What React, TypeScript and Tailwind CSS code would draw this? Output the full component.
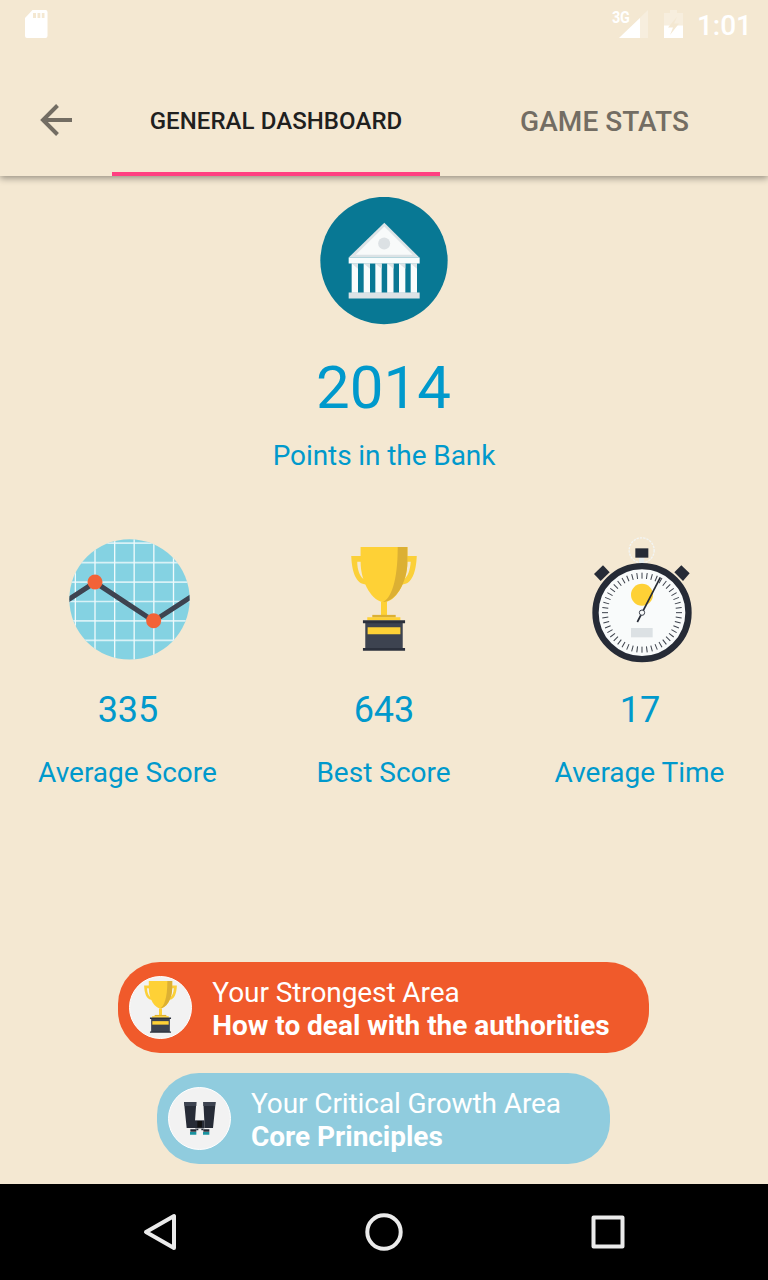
import type { ReactNode } from "react";

interface StatProps {
  icon: ReactNode;
  value: string;
  label: string;
}

interface AreaBadgeProps {
  className: string;
  icon: ReactNode;
  title: string;
  area: string;
}

const BankIcon = () => (
  <svg className="h-32 w-32" viewBox="30 20.5 384 384">
    <circle cx="222" cy="211" r="191" fill="#087894" />
    <path d="M223 98 L328 202 H116 Z" fill="#dce3e6" />
    <path d="M223 109 L308 194 H137 Z" fill="#f8fafa" />
    <path d="M116 202 H329 V220 H116 Z" fill="#f8fcfc" />
    <circle cx="222.500" cy="160" r="18" fill="#dce1e4" />
    {[125, 161, 196, 231.5, 267, 302].map((x) => (
      <g key={x}>
        <path d={`M${x} 220 h19 v88 h-19 Z`} fill="#f8fcfc" />
        <path d={`M${x} 220 h19 v16 Z`} fill="#dce3e6" />
      </g>
    ))}
    <path d="M116 307 H329 V325 H116 Z" fill="#dce3e6" />
  </svg>
);

const ChartIcon = () => (
  <svg className="h-[121px] w-[121px]" viewBox="27 26 363 363">
    <defs>
      <clipPath id="chart-clip">
        <circle cx="208.500" cy="207" r="180.500" />
      </clipPath>
    </defs>
    <g clipPath="url(#chart-clip)">
      <rect x="20" y="20" width="380" height="380" fill="#84d2e2" />
      <path
        d="M20 38.500H400M20 97H400M20 155.500H400M20 213.500H400M20 271.500H400M20 330H400"
        stroke="#d8f1f6"
        strokeWidth="5"
      />
      <path
        d="M46 20V400M105 20V400M164 20V400M222.500 20V400M281.500 20V400M340.500 20V400"
        stroke="#effafc"
        strokeWidth="4"
      />
      <path d="M20 211 L105 156 L281 272 L400 195" fill="none" stroke="#3d4350" strokeWidth="15" />
    </g>
    <circle cx="105" cy="155" r="22.500" fill="#f26337" />
    <circle cx="281" cy="271" r="22.500" fill="#f26337" />
  </svg>
);

const TrophyIcon = ({ className }: { className: string }) => (
  <svg className={className} viewBox="36 36 196 311">
    <path d="M36 63 H66 V80 H54 C54 104 62 127 77 134 L84 148 C50 150 38 110 36 63 Z" fill="#fbd039" />
    <path d="M232 63 H203 V80 H214 C212 104 206 125 192 134 L185 148 C218 150 230 110 232 63 Z" fill="#fbd039" />
    <path d="M64 36 H204 V80 C204 145 166 201 134 201 C102 201 64 145 64 80 Z" fill="#fed136" />
    <path d="M175 36 H204 V80 C204 145 166 201 130 201 C155 190 175 140 175 36 Z" fill="#dcb033" />
    <path d="M125 200 H143 V240 H125 Z" fill="#fed136" />
    <path d="M99 239 H169 V247 H99 Z" fill="#dcb033" />
    <path d="M84 246 H183 V256 H84 Z" fill="#fed136" />
    <path d="M78 260 H190 V341 H78 Z" fill="#3d4350" />
    <path d="M71 255 H197 V264 H71 Z M71 338 H197 V346 H71 Z" fill="#2b303c" />
    <path d="M85 276 H183 V297 H85 Z" fill="#fed136" />
  </svg>
);

const ticks = Array.from({ length: 48 }, (_, i) => i * 7.5);

const StopwatchIcon = () => (
  <svg className="h-[126px] w-[100px]" viewBox="35 20 300 378">
    <circle cx="184" cy="60" r="37.500" fill="none" stroke="#f2f5f5" strokeWidth="4" strokeDasharray="7 3" />
    <path d="M176 82 H192 V100 H176 Z" fill="#e6eced" />
    <path d="M165 54 H204 V82 H165 Z" fill="#262b36" />
    <path d="M68 105 L88 126 L61 152 L41 131 Z" fill="#262b36" />
    <path d="M303 105 L328 129 L308 152 L282 126 Z" fill="#262b36" />
    <circle cx="185" cy="247" r="139.500" fill="#f9fbfb" stroke="#262b36" strokeWidth="19" />
    {ticks.map((deg) => (
      <path key={deg} d="M185 127 V145" stroke="#3d424c" strokeWidth="3" transform={`rotate(${deg} 185 247)`} />
    ))}
    <circle cx="185" cy="193" r="33" fill="#fed136" />
    <path d="M152 293 H217 V321 H152 Z" fill="#dce1e4" />
    <path d="M240 141 L171 275" stroke="#262b36" strokeWidth="5" />
    <circle cx="185" cy="247" r="8" fill="#f9fbfb" stroke="#3d424c" strokeWidth="3" />
  </svg>
);

const BinocularsIcon = () => (
  <svg className="ml-px h-[33px] w-8" viewBox="101 101 96 99">
    <path d="M101 101 H138 L134 158 V179 H109 Z M159 101 H196 L188 179 H162 V158 Z" fill="#262b36" />
    <path d="M102 101 H138 V113 H103 Z M159 101 H195 L194 113 H159 Z" fill="#3d4350" />
    <path d="M134 156 H162 V180 H134 Z" fill="#262b36" />
    <path d="M141 158 H155 V177 H141 Z" fill="#111" />
    <path d="M120 183 H138 V190 H120 Z M159 183 H177 V190 H159 Z" fill="#262b36" />
    <path d="M119 191 H138 V199 H119 Z M158 191 H177 V199 H158 Z" fill="#18929f" />
    <path d="M138 181 h6 v5 h-6 Z M153 181 h6 v5 h-6 Z" fill="#262b36" />
  </svg>
);

const StatusBar = () => (
  <div className="flex h-12 items-center justify-between pr-4 pl-6 text-white">
    <svg className="h-7 w-6" viewBox="0 0 24 28" fill="currentColor">
      <path
        fillRule="evenodd"
        d="M8.500 0 H21.500 Q23.500 0 23.500 2 V26 Q23.500 28 21.500 28 H3 Q1 28 1 26 V8 Z M9 3 V8 H12 V3 Z M13.500 3 V8 H16.300 V3 Z M17.800 3 V8 H20.500 V3 Z"
      />
    </svg>
    <div className="flex items-center">
      <div className="flex h-7 items-start">
        <span className="-mr-[11px] origin-right scale-x-90 text-[16px] leading-[15px] font-bold tracking-[-0.3px]">
          3G
        </span>
        <svg className="h-7 w-[29px]" viewBox="0 0 29 28" fill="currentColor">
          <path d="M29 0 V28 H0 Z" opacity="0.28" />
          <path d="M21 8 V28 H0 Z" />
        </svg>
      </div>
      <svg className="ml-4 h-[29px] w-[19px] pb-px" viewBox="0 0 19 29" preserveAspectRatio="none" fill="currentColor">
        <path d="M6 0 H13 V3 H19 V16 H0 V3 H6 Z" opacity="0.28" />
        <path d="M0 16 H19 V29 H0 Z" />
        <path d="M13 7 L4 18 H9 L6 26 L15 14 H10 Z" fill="#f4e8d2" />
      </svg>
      <span className="ml-3.5 pt-[3px] text-[28px] leading-8 font-medium">1:01</span>
    </div>
  </div>
);

const Header = () => (
  <header className="h-44 bg-[#f4e8d2] shadow-[0_2px_7px_rgba(0,0,0,0.4)]">
    <StatusBar />
    <div className="mt-4 flex h-28">
      <button className="flex w-28 items-center pl-10">
        <svg className="h-8 w-8" viewBox="0 0 32 32" fill="none" stroke="#736d63" strokeWidth="4">
          <path d="M17.500 1.500 L3 16 L17.500 30.500 M3 16 H32" />
        </svg>
      </button>
      <button className="flex w-[328px] items-center justify-center border-b-4 border-[#ff4081] pt-1.5 text-[24px] font-medium tracking-[0.07px] text-[#20201e]">
        GENERAL DASHBOARD
      </button>
      <button className="flex w-[328px] items-center justify-center pt-1 pl-px text-[28px] font-medium tracking-[0.05px] text-[#736d63]">
        GAME STATS
      </button>
    </div>
  </header>
);

const Stat = ({ icon, value, label }: StatProps) => (
  <div className="flex w-64 flex-col items-center">
    <div className="flex h-[126px] items-center justify-center">{icon}</div>
    <p className="mt-[26px] text-[36px] leading-[42px]">{value}</p>
    <p className="mt-[25px] pr-px text-[28px] leading-[33px]">{label}</p>
  </div>
);

const AreaBadge = ({ className, icon, title, area }: AreaBadgeProps) => (
  <div className={`flex h-[91px] items-center gap-5 rounded-[42px] pl-[11px] text-white ${className}`}>
    <div className="flex h-[63px] w-[63px] items-center justify-center rounded-full border border-white bg-[#f2f2f2]">
      {icon}
    </div>
    <div className="pt-0.5 text-[28px] leading-[33px]">
      <p className="tracking-[-0.09px]">{title}</p>
      <p className="font-bold tracking-[-0.03px]">{area}</p>
    </div>
  </div>
);

const NavBar = () => (
  <nav className="flex h-24 items-center justify-center gap-[184px] bg-black">
    <svg className="h-10 w-10" viewBox="0 0 40 40" fill="none" stroke="#ebebeb" strokeWidth="4" strokeLinejoin="round">
      <path d="M34 4 V36 L6 20 Z" />
    </svg>
    <svg className="h-10 w-10" viewBox="0 0 40 40" fill="none" stroke="#ebebeb" strokeWidth="4">
      <circle cx="20" cy="20" r="16.700" />
    </svg>
    <svg className="h-10 w-10" viewBox="0 0 40 40" fill="none" stroke="#ebebeb" strokeWidth="4" strokeLinejoin="round">
      <rect x="5.500" y="5.500" width="29" height="29" />
    </svg>
  </nav>
);

export default function App() {
  return (
    <div className="flex h-[1280px] w-[768px] flex-col bg-[#f4e8d2] font-[Roboto,sans-serif]">
      <Header />
      <main className="flex flex-1 flex-col items-center pt-[21px] text-[#0099cc]">
        <BankIcon />
        <p className="mt-7 pr-px text-[60px] leading-[70px]">2014</p>
        <p className="mt-4 text-[28px] leading-[33px] tracking-[-0.09px]">Points in the Bank</p>

        <div className="mt-[65px] flex">
          <Stat
            icon={
              <div className="pb-0.5 pl-[3px]">
                <ChartIcon />
              </div>
            }
            value="335"
            label="Average Score"
          />
          <Stat icon={<TrophyIcon className="mb-0.5 h-[104px] w-[66px]" />} value="643" label="Best Score" />
          <Stat
            icon={
              <div className="pb-px pl-[3px]">
                <StopwatchIcon />
              </div>
            }
            value="17"
            label="Average Time"
          />
        </div>

        <div className="mt-auto flex flex-col items-center gap-5 pr-px pb-5">
          <AreaBadge
            className="bg-[#f05a2b] pr-[39px]"
            icon={<TrophyIcon className="mb-0.5 h-[52px] w-[33px]" />}
            title="Your Strongest Area"
            area="How to deal with the authorities"
          />
          <AreaBadge
            className="bg-[#90ccde] pr-[49px]"
            icon={<BinocularsIcon />}
            title="Your Critical Growth Area"
            area="Core Principles"
          />
        </div>
      </main>
      <NavBar />
    </div>
  );
}
